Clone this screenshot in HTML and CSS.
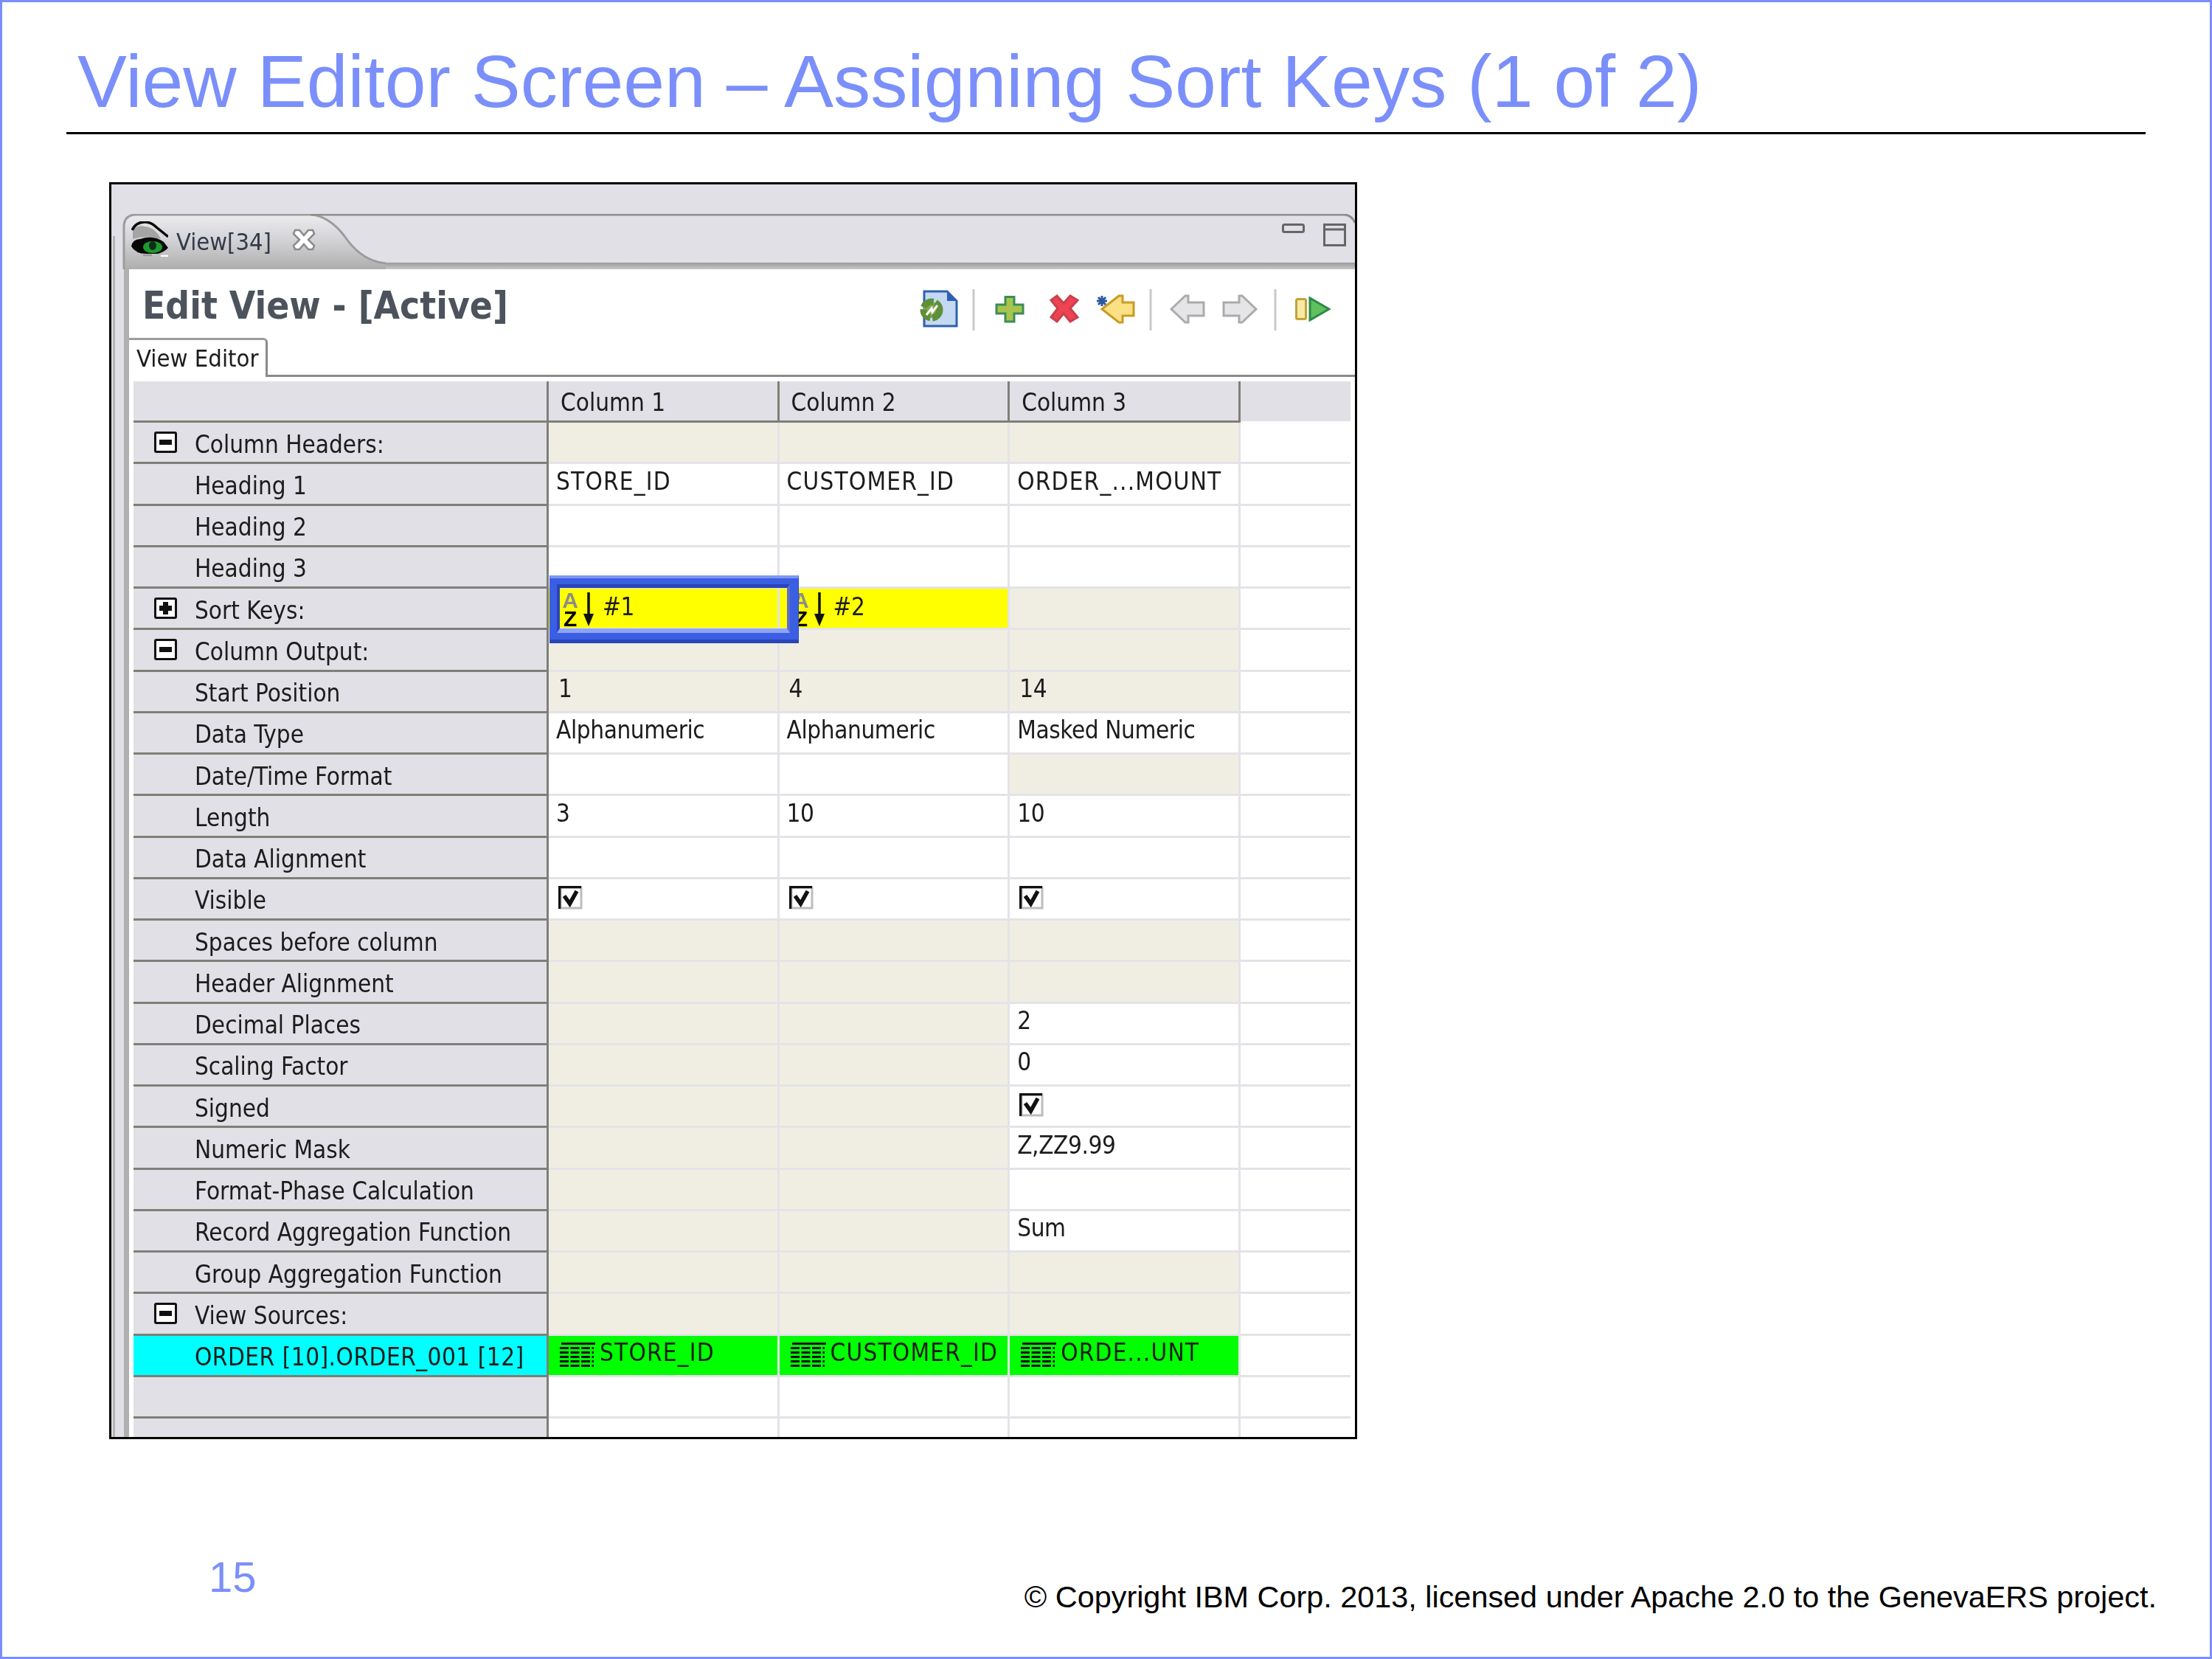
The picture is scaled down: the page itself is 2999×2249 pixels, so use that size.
FILE: index.html
```html
<!DOCTYPE html>
<html lang="en">
<head>
<meta charset="utf-8">
<title>View Editor Screen</title>
<link rel="stylesheet" href="styles.css">
</head>
<body>
<svg class="sprite" width="0" height="0">
  <symbol id="i-check" viewBox="0 0 33 32">
    <rect x="3" y="2" width="28" height="28" fill="#fff" stroke="#bdbdbd" stroke-width="3"/>
    <path d="M1.500 31V1.500H31" fill="none" stroke="#111" stroke-width="3.500"/>
    <path d="M8 13.500l7.500 10.500 9.500-17" fill="none" stroke="#111" stroke-width="5.500"/>
  </symbol>
  <symbol id="i-table" viewBox="0 0 48 33">
    <rect x="2" y="0" width="46" height="3" fill="#111"/>
    <g stroke="#111" stroke-width="3" stroke-dasharray="12 2.5" fill="none">
      <path d="M0 7.500H46M0 13.500H46M0 19.500H46M0 25.500H46M0 31.500H46"/>
    </g>
  </symbol>
  <symbol id="i-arrow" viewBox="0 0 14 46">
    <path d="M7 0V34" stroke="#111" stroke-width="3.500"/>
    <path d="M0 29H14L7 46z" fill="#111"/>
  </symbol>
</svg>

<main class="slide">
  <header class="slide-head">
    <h1 class="slide-title">View Editor Screen – Assigning Sort Keys (1 of 2)</h1>
  </header>

  <section class="panel">
    <div class="rail"></div>
    <div class="tabbar">
      <svg class="tabbar-art" width="1686" height="75" viewBox="0 0 1686 75">
        <defs>
          <linearGradient id="tabfill" x1="0" y1="0" x2="0" y2="1">
            <stop offset="0" stop-color="#ececef"/>
            <stop offset="0.45" stop-color="#d4d4d8"/>
            <stop offset="1" stop-color="#aeaeae"/>
          </linearGradient>
          <linearGradient id="bandfill" x1="0" y1="0" x2="0" y2="1">
            <stop offset="0" stop-color="#9a9a9a"/>
            <stop offset="1" stop-color="#c8c8c8"/>
          </linearGradient>
        </defs>
        <rect x="250" y="66" width="1436" height="9" fill="url(#bandfill)"/>
        <path d="M17 75V16Q18 1 34 1H272Q296 4 316 30Q339 64 372 67V75Z" fill="url(#tabfill)"/>
        <path d="M17 75V16Q18 1 34 1H272Q296 4 316 30Q339 64 372 67" fill="none" stroke="#9c9c9c" stroke-width="3"/>
        <path d="M270 1H1672Q1682 2 1686 12" fill="none" stroke="#8e8e8e" stroke-width="3"/>
        <g fill="none" stroke="#666" stroke-width="3">
          <rect x="1588.500" y="14.500" width="28" height="10" rx="2"/>
          <rect x="1644.500" y="14.500" width="28" height="28"/>
          <path d="M1644 21H1673"/>
        </g>
      </svg>
      <svg class="eye" width="50" height="48" viewBox="0 0 50 48">
        <path d="M2 24V12Q10 4 18 7Q32 8 40 24L28 22Q14 20 2 24z" fill="#a4a4a4"/>
        <path d="M1 12Q7 0 20 1Q28 2 34 8L50 21" fill="none" stroke="#0c0c0c" stroke-width="3.500"/>
        <path d="M0 34Q2 24 12 24Q30 18 44 28L50 36Q44 42 36 44H20Q6 44 0 34z" fill="#080808"/>
        <ellipse cx="29" cy="35" rx="13" ry="8" fill="#1f9a2f"/>
        <ellipse cx="29" cy="33" rx="5" ry="6" fill="#0f2d18"/>
        <path d="M16 46H28" stroke="#9a9a9a" stroke-width="2.500"/>
        <path d="M40 47H50" stroke="#fff" stroke-width="2.500"/>
      </svg>
      <span class="tab-label">View[34]</span>
      <svg class="tab-close" width="32" height="30" viewBox="0 0 32 30">
        <path d="M4 2H10L16 9 22 2H28L30 7 22 15 30 23 28 28H22L16 21 10 28H4L2 23 10 15 2 7z" fill="#fff" stroke="#8a8a8a" stroke-width="2.500"/>
      </svg>
    </div>

    <div class="editor">
      <div class="ed-head">
        <h2 class="ed-title">Edit View - [Active]</h2>
        <svg class="toolbar" width="557" height="56" viewBox="0 0 557 56">
          <path d="M6 3H37L50 16V50H6z" fill="#c5d8f2" stroke="#2f5fb0" stroke-width="3"/>
          <path d="M37 3V16H50z" fill="#2f5fb0"/>
          <circle cx="16" cy="28" r="11" fill="#7fa84a" stroke="#5f8f38" stroke-width="9" stroke-dasharray="16 3"/>
          <path d="M9 35L16 26 17 31 24 22" fill="none" stroke="#fff" stroke-width="3"/>
          <path d="M73 0V56M313 0V56M482 0V56" stroke="#c9c9cd" stroke-width="3"/>
          <path d="M116 10.500H128V21H140V33H128V44H116V33H104V21H116z" fill="#a8c44e" stroke="#3c8c58" stroke-width="3"/>
          <path d="M178 15L186 9 195 19 204 9 214 15 204 26 214 38 204 44 195 33 186 44 178 38 187 26z" fill="#ef4352" stroke="#c9404c" stroke-width="3"/>
          <path d="M247 27L270 9H275V18H290V36H275V45H270z" fill="#fbe084" stroke="#c99b25" stroke-width="3"/>
          <path d="M240 16H254M247 9V23M242 11L252 21M252 11L242 21" stroke="#2c5a9c" stroke-width="3"/>
          <path d="M341 27L360 9H364V18H385V36H364V45H360z" fill="#e5e5e7" stroke="#ababad" stroke-width="3"/>
          <path d="M456 27L437 9H433V18H412V36H433V45H437z" fill="#e5e5e7" stroke="#ababad" stroke-width="3"/>
          <rect x="510.500" y="13.500" width="13" height="27" rx="2" fill="#f7e9a5" stroke="#c3a337" stroke-width="3"/>
          <path d="M529 12V42L555 27z" fill="#5fc05f" stroke="#2c8a44" stroke-width="3"/>
        </svg>
      </div>
      <div class="ed-tabs"><span class="ed-tab">View Editor</span></div>

      <div class="grid">
        <div class="cell hd"></div><div class="cell hd col">Column 1</div><div class="cell hd col">Column 2</div><div class="cell hd col">Column 3</div><div class="cell hd-x"></div>

        <div class="cell lab toggled"><span class="tog"></span>Column Headers:</div><div class="cell d be"></div><div class="cell d be"></div><div class="cell d be"></div><div class="cell d x"></div>
        <div class="cell lab">Heading 1</div><div class="cell d caps">STORE_ID</div><div class="cell d caps">CUSTOMER_ID</div><div class="cell d caps">ORDER_...MOUNT</div><div class="cell d x"></div>
        <div class="cell lab">Heading 2</div><div class="cell d"></div><div class="cell d"></div><div class="cell d"></div><div class="cell d x"></div>
        <div class="cell lab">Heading 3</div><div class="cell d"></div><div class="cell d"></div><div class="cell d"></div><div class="cell d x"></div>
        <div class="cell lab toggled"><span class="tog plus"></span>Sort Keys:</div>
        <div class="cell d ye"><span class="az"><span class="az-a">A</span><span class="az-z">Z</span></span><svg class="az-arrow" width="14" height="46"><use href="#i-arrow"/></svg><span class="key">#1</span></div>
        <div class="cell d ye"><span class="az"><span class="az-a">A</span><span class="az-z">Z</span></span><svg class="az-arrow" width="14" height="46"><use href="#i-arrow"/></svg><span class="key">#2</span></div>
        <div class="cell d be"></div><div class="cell d x"></div>
        <div class="cell lab toggled"><span class="tog"></span>Column Output:</div><div class="cell d be"></div><div class="cell d be"></div><div class="cell d be"></div><div class="cell d x"></div>
        <div class="cell lab">Start Position</div><div class="cell d be num">1</div><div class="cell d be num">4</div><div class="cell d be num">14</div><div class="cell d x"></div>
        <div class="cell lab">Data Type</div><div class="cell d">Alphanumeric</div><div class="cell d">Alphanumeric</div><div class="cell d">Masked Numeric</div><div class="cell d x"></div>
        <div class="cell lab">Date/Time Format</div><div class="cell d"></div><div class="cell d"></div><div class="cell d be"></div><div class="cell d x"></div>
        <div class="cell lab">Length</div><div class="cell d">3</div><div class="cell d">10</div><div class="cell d">10</div><div class="cell d x"></div>
        <div class="cell lab">Data Alignment</div><div class="cell d"></div><div class="cell d"></div><div class="cell d"></div><div class="cell d x"></div>
        <div class="cell lab">Visible</div><div class="cell d"><svg class="chk" width="33" height="32"><use href="#i-check"/></svg></div><div class="cell d"><svg class="chk" width="33" height="32"><use href="#i-check"/></svg></div><div class="cell d"><svg class="chk" width="33" height="32"><use href="#i-check"/></svg></div><div class="cell d x"></div>
        <div class="cell lab">Spaces before column</div><div class="cell d be"></div><div class="cell d be"></div><div class="cell d be"></div><div class="cell d x"></div>
        <div class="cell lab">Header Alignment</div><div class="cell d be"></div><div class="cell d be"></div><div class="cell d be"></div><div class="cell d x"></div>
        <div class="cell lab">Decimal Places</div><div class="cell d be"></div><div class="cell d be"></div><div class="cell d">2</div><div class="cell d x"></div>
        <div class="cell lab">Scaling Factor</div><div class="cell d be"></div><div class="cell d be"></div><div class="cell d">0</div><div class="cell d x"></div>
        <div class="cell lab">Signed</div><div class="cell d be"></div><div class="cell d be"></div><div class="cell d"><svg class="chk" width="33" height="32"><use href="#i-check"/></svg></div><div class="cell d x"></div>
        <div class="cell lab">Numeric Mask</div><div class="cell d be"></div><div class="cell d be"></div><div class="cell d">Z,ZZ9.99</div><div class="cell d x"></div>
        <div class="cell lab">Format-Phase Calculation</div><div class="cell d be"></div><div class="cell d be"></div><div class="cell d"></div><div class="cell d x"></div>
        <div class="cell lab">Record Aggregation Function</div><div class="cell d be"></div><div class="cell d be"></div><div class="cell d">Sum</div><div class="cell d x"></div>
        <div class="cell lab">Group Aggregation Function</div><div class="cell d be"></div><div class="cell d be"></div><div class="cell d be"></div><div class="cell d x"></div>
        <div class="cell lab toggled"><span class="tog"></span>View Sources:</div><div class="cell d be"></div><div class="cell d be"></div><div class="cell d be"></div><div class="cell d x"></div>
        <div class="cell lab cy">ORDER [10].ORDER_001 [12]</div>
        <div class="cell d gr caps"><svg class="tbl" width="48" height="33"><use href="#i-table"/></svg>STORE_ID</div>
        <div class="cell d gr caps"><svg class="tbl" width="48" height="33"><use href="#i-table"/></svg>CUSTOMER_ID</div>
        <div class="cell d gr caps"><svg class="tbl" width="48" height="33"><use href="#i-table"/></svg>ORDE...UNT</div>
        <div class="cell d x"></div>
        <div class="cell lab"></div><div class="cell d"></div><div class="cell d"></div><div class="cell d"></div><div class="cell d x"></div>
        <div class="cell lab"></div><div class="cell d"></div><div class="cell d"></div><div class="cell d"></div><div class="cell d x"></div>

        <div class="sel"><div class="sel-mid"><div class="sel-in"></div></div></div>
      </div>
    </div>
  </section>

  <footer class="slide-foot">
    <span class="page-no">15</span>
    <span class="copy">© Copyright IBM Corp. 2013, licensed under Apache 2.0 to the GenevaERS project.</span>
  </footer>
</main>
</body>
</html>
```

FILE: styles.css
```css
* { box-sizing: border-box; }
html, body { margin: 0; padding: 0; background: #fff; }
.sprite { position: absolute; }

.slide {
  width: 2999px;
  height: 2249px;
  border: 3px solid #7b8ffb;
  display: flex;
  flex-direction: column;
  font-family: "Liberation Sans", Arial, sans-serif;
  overflow: hidden;
  background: #fff;
}

.slide-head {
  margin: 47px 87px 0 87px;
  border-bottom: 3px solid #000;
  padding: 0 0 9px 15px;
}
.slide-title {
  margin: 0;
  font-size: 100.4px;
  line-height: 120px;
  font-weight: 400;
  color: #7b8ffb;
  white-space: nowrap;
}

.panel {
  position: relative;
  margin: 65px 0 0 145px;
  width: 1692px;
  height: 1704px;
  border: 3px solid #000;
  background: #e0e0e6;
  padding-top: 40px;
  display: flex;
  flex-direction: column;
  overflow: hidden;
  font-family: "DejaVu Sans Condensed", "DejaVu Sans", sans-serif;
  font-stretch: condensed;
  color: #1c1c1c;
  filter: blur(0.7px);
}
.rail {
  position: absolute;
  left: 2px;
  top: 70px;
  bottom: 0;
  width: 3px;
  background: #b4b4b4;
}

.tabbar {
  position: relative;
  height: 75px;
  display: flex;
  align-items: flex-start;
  padding: 10px 0 0 27px;
  flex: none;
}
.tabbar-art { position: absolute; left: 0; top: 0; }
.eye { position: relative; flex: none; }
.tab-label {
  position: relative;
  font-size: 32.4px;
  line-height: 40px;
  margin: 8px 0 0 11px;
  color: #333a48;
}
.tab-close { position: relative; flex: none; margin: 10px 0 0 28px; }

.editor {
  flex: 1;
  min-height: 0;
  margin-left: 17px;
  border-left: 7px solid #b0b0b0;
  background: #fff;
  display: flex;
  flex-direction: column;
}
.ed-head {
  height: 93px;
  flex: none;
  display: flex;
  align-items: flex-start;
  padding-right: 33px;
}
.ed-title {
  margin: 20px 0 0 18px;
  font-size: 51px;
  line-height: 60px;
  font-weight: 700;
  color: #4c535c;
  white-space: nowrap;
}
.toolbar { margin: 27px 0 0 auto; flex: none; }

.ed-tabs {
  height: 53px;
  flex: none;
  border-bottom: 3px solid #8a8a8a;
  display: flex;
  align-items: flex-end;
}
.ed-tab {
  height: 53px;
  width: 188px;
  border-top: 3px solid #9c9c9c;
  border-right: 3px solid #8a8a8a;
  border-top-right-radius: 6px;
  background: #fff;
  font-size: 32.6px;
  line-height: 50px;
  padding-left: 10px;
  margin-bottom: -3px;
}

.grid {
  position: relative;
  flex: 1;
  min-height: 0;
  margin: 6px 6px 0 6px;
  display: grid;
  grid-template-columns: 563px 312.6px 312.6px 312.6px 1fr;
  grid-template-rows: 56px;
  grid-auto-rows: 56.25px;
  overflow: hidden;
  font-size: 33px;
  white-space: nowrap;
}
.cell {
  display: flex;
  align-items: center;
  overflow: hidden;
}
.hd {
  background: #e0e0e6;
  border-right: 3px solid #7f7f78;
  border-bottom: 3px solid #7f7f78;
}
.col { padding-left: 16px; padding-top: 3px; }
.hd-x { background: #e0e0e6; height: 54px; }
.lab {
  background: #e0e0e6;
  border-right: 3px solid #7f7f78;
  border-bottom: 3px solid #7f7f78;
  padding: 5px 0 0 83px;
}
.toggled { padding-left: 28px; }
.tog {
  position: relative;
  flex: none;
  width: 31px;
  height: 29px;
  margin: -6px 24px 0 0;
  border: 3px solid #111;
  border-radius: 3px;
  background: #fff;
}
.tog::before {
  content: "";
  position: absolute;
  left: 4px;
  right: 4px;
  top: 8px;
  height: 7px;
  background: #111;
}
.plus::after {
  content: "";
  position: absolute;
  top: 3px;
  bottom: 3px;
  left: 9px;
  width: 7px;
  background: #111;
}
.cy { background: #00ffff; letter-spacing: 0.5px; }
.d {
  background: #fff;
  border-right: 3px solid #e3e3e8;
  border-bottom: 3px solid #e3e3e8;
  padding: 0 0 7px 10px;
  letter-spacing: -0.4px;
}
.caps { letter-spacing: 1.2px; }
.x { border-right: 0; }
.be { background: #f0eee2; }
.num { padding-left: 13px; }
.ye { background: #ffff00; padding: 3px 0 0 17px; overflow: visible; }
.gr { background: #00ff00; padding: 0 0 7px 15px; }
.az {
  display: flex;
  flex-direction: column;
  flex: none;
  width: 24px;
  font-family: "Liberation Sans", sans-serif;
  font-weight: 700;
  font-size: 30px;
  line-height: 25px;
  text-align: center;
}
.az-a { color: #8e8e86; }
.az-z { color: #000; }
.az-arrow { margin: 0 0 0 6px; flex: none; }
.key { margin: -8px 0 0 12px; }
.chk { margin: 4px 0 0 3px; flex: none; }
.tbl { margin: 6px 6px 0 0; flex: none; }

.sel {
  position: absolute;
  left: 564px;
  top: 263px;
  width: 338px;
  height: 92px;
  border-top: 4px solid #7f98f2;
  border-left: 1px solid #3b5fe3;
  border-right: 1px solid #2f4cc4;
  border-bottom: 5px solid #2a45b8;
}
.sel-mid {
  height: 100%;
  border: solid #3b5fe3;
  border-width: 8px 11px 9px 9px;
}
.sel-in {
  height: 100%;
  border: solid #2a45b8;
  border-width: 5px 4px 6px 4px;
  border-bottom-color: #8ea4f2;
  border-right-color: #5a6fc8;
}

.slide-foot {
  flex: 1;
  display: flex;
  justify-content: space-between;
  align-items: flex-end;
  padding: 0 72px 56px 280px;
}
.page-no {
  font-size: 58px;
  line-height: 70px;
  color: #7b8ffb;
  margin-bottom: 17px;
}
.copy {
  font-size: 41.4px;
  line-height: 50px;
  color: #000;
}
```
